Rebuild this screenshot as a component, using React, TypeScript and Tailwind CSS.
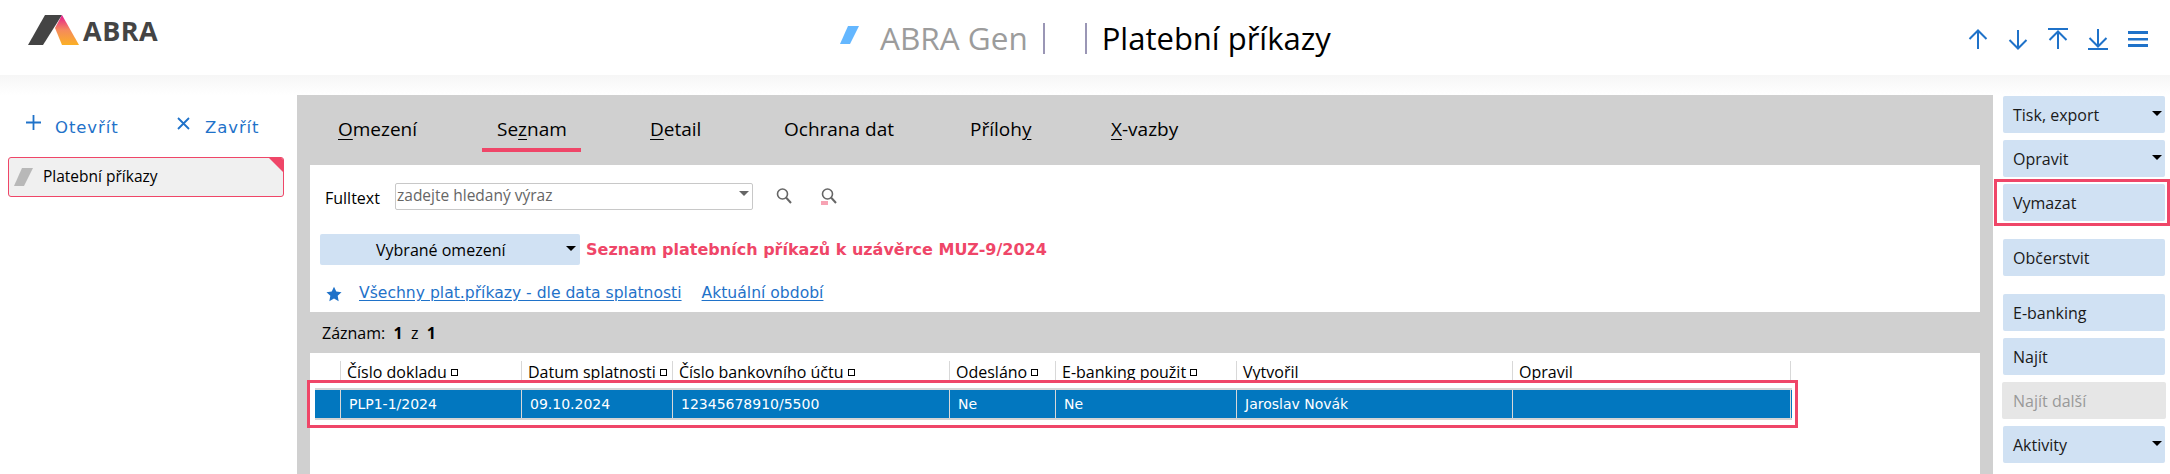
import type { ReactNode } from "react";

const segoe = "font-['Open_Sans','Noto_Sans',sans-serif]";
const tahoma = "font-['DejaVu_Sans',sans-serif]";

function Key({ children }: { children: ReactNode }) {
  return <span className="underline underline-offset-[3px] decoration-1">{children}</span>;
}

function NavIcon({ d }: { d: string }) {
  return (
    <svg width="24" height="24" viewBox="0 0 24 24" fill="none" stroke="#1f72c9" strokeWidth="2">
      <path d={d} />
    </svg>
  );
}

function Caret({ className }: { className: string }) {
  return <span className={`w-0 h-0 border-x-[5px] border-x-transparent border-t-[5px] ${className}`} />;
}

function SideButton({ label, menu, disabled, mt }: { label: string; menu?: boolean; disabled?: boolean; mt: string }) {
  return (
    <button
      className={`h-[37px] rounded-[2px] flex items-center justify-between pr-[3px] text-[16px] text-left ${mt} ${
        disabled ? "w-[164px] -ml-px pl-[11px] bg-[#e6e6e6] text-[#999999]" : "w-[162px] pl-[10px] bg-[#d0e1f3] text-[#1a1a1a]"
      }`}
    >
      {label}
      {menu && <Caret className="border-t-black mb-[3px]" />}
    </button>
  );
}

function SortBox() {
  return <span className="inline-block w-[7px] h-[7px] border border-black ml-[4px] mb-[2px]" />;
}

const columns = [
  { title: "", value: "", width: "w-[26px]", sort: false },
  { title: "Číslo dokladu", value: "PLP1-1/2024", width: "w-[181px]", sort: true },
  { title: "Datum splatnosti", value: "09.10.2024", width: "w-[151px]", sort: true },
  { title: "Číslo bankovního účtu", value: "12345678910/5500", width: "w-[277px]", sort: true },
  { title: "Odesláno", value: "Ne", width: "w-[106px]", sort: true },
  { title: "E-banking použit", value: "Ne", width: "w-[181px]", sort: true },
  { title: "Vytvořil", value: "Jaroslav Novák", width: "w-[276px]", sort: false },
  { title: "Opravil", value: "", width: "w-[278px]", sort: false },
];

function SearchIcon({ marked }: { marked?: boolean }) {
  return (
    <svg width="18" height="18" viewBox="0 0 18 18" fill="none" strokeWidth="1.6">
      <circle cx="7.5" cy="7" r="5" stroke="#666666" />
      <path d="M11 10.5 16 16" stroke="#666666" strokeWidth="2" />
      {marked && <path d="M1 15h7M1 17h7" stroke="#ef4668" strokeWidth="1" />}
    </svg>
  );
}

export default function App() {
  return (
    <div className={`w-[2170px] h-[474px] overflow-hidden bg-white text-black ${segoe}`}>
      <header className="h-[75px] flex items-center">
        <div className="w-[840px] flex items-center pl-[28px] pb-[15px]">
          <svg width="52" height="31" viewBox="0 0 52 31">
            <defs>
              <linearGradient id="abra" x1="0" y1="0" x2="0" y2="1">
                <stop offset="0" stopColor="#e5178f" />
                <stop offset="0.5" stopColor="#f58a5c" />
                <stop offset="1" stopColor="#fbb025" />
              </linearGradient>
            </defs>
            <path d="M0 30 17 0h17L15 30z" fill="#444444" />
            <path d="M34 0 51 30H34l-7-17z" fill="url(#abra)" />
          </svg>
          <span className="ml-[3px] text-[27px] font-bold text-[#444444] tracking-[0.5px] leading-none">ABRA</span>
        </div>
        <div className="flex items-center w-[1127px] pt-[1px]">
          <svg width="20" height="18" viewBox="0 0 20 18" className="mt-[-6px]">
            <path d="M8 0h11L10 18H0z" fill="#64b7ff" />
          </svg>
          <span className="ml-[20px] text-[31.500px] text-[#9c9c9c] leading-none">ABRA Gen</span>
          <span className="ml-[15px] w-[2px] h-[31px] bg-[#9a96b5]" />
          <span className="ml-[40px] w-[2px] h-[31px] bg-[#9a96b5]" />
          <span className="ml-[15px] text-[31px] leading-none">Platební příkazy</span>
        </div>
        <div className="flex items-center pt-[3px]">
          <div className="flex gap-[16px] -ml-[1px]">
            <NavIcon d="M12 22V4M3.5 12 12 3.5 20.5 12" />
            <NavIcon d="M12 3v18M3.5 13 12 21.5 20.5 13" />
            <NavIcon d="M12 22V4M3.5 13 12 4.5 20.5 13M2 2h20" />
            <NavIcon d="M12 2v18M3.5 11 12 19.5 20.5 11M2 22h20" />
          </div>
          <svg width="20" height="16" viewBox="0 0 20 16" className="ml-[18px]" fill="#1f72c9">
            <path d="M0 0h20v3H0zM0 7h20v2.500H0zM0 13h20v3H0z" />
          </svg>
        </div>
      </header>
      <div className="h-[20px] bg-gradient-to-b from-[#f6f6f6] to-white" />

      <div className="flex">
        <aside className="w-[297px] shrink-0">
          <div className={`flex h-[62px] pt-[20px] text-[16.500px] tracking-[0.9px] text-[#1f72c9] ${tahoma}`}>
            <div className="w-[176px] flex items-start pl-[26px]">
              <svg width="15" height="15" viewBox="0 0 15 15" stroke="#1f72c9" strokeWidth="1.8">
                <path d="M7.500 0v15M0 7.500h15" />
              </svg>
              <span className="ml-[14px] mt-[3px] leading-[20px]">Otevřít</span>
            </div>
            <div className="flex items-start pl-[1px]">
              <svg width="13" height="13" viewBox="0 0 13 13" stroke="#1f72c9" strokeWidth="1.8" className="mt-[2px]">
                <path d="m1 1 11 11M12 1 1 12" />
              </svg>
              <span className="ml-[15px] mt-[3px] leading-[20px]">Zavřít</span>
            </div>
          </div>
          <div className="relative ml-[8px] w-[276px] h-[40px] rounded-[3px] border border-[#ef4668] bg-[#f0f0f0] flex items-center overflow-hidden">
            <svg width="20" height="18" viewBox="0 0 20 18" className="ml-[5px] mt-[-1px]">
              <path d="M8 0h11L10 18H0z" fill="#b8b8b8" />
            </svg>
            <span className="ml-[9px] text-[15.500px] font-medium">Platební příkazy</span>
            <span className="absolute top-0 right-0 w-0 h-0 border-l-[14px] border-l-transparent border-t-[14px] border-t-[#ef4668]" />
          </div>
        </aside>

        <main className="w-[1696px] shrink-0 h-[379px] bg-[#d0d0d0] pl-[13px] pr-[13px]">
          <nav className="h-[70px] flex text-[19px]">
            <div className="w-[172px] pl-[28px] pt-[20px]"><Key>O</Key>mezení</div>
            <div className="w-[168px] relative pl-[15px] pt-[20px]">
              <span>Se<Key>z</Key>nam</span>
              <span className="absolute left-0 top-[53px] w-[99px] h-[4px] bg-[#ef4668]" />
            </div>
            <div className="w-[134px] pt-[20px]"><Key>D</Key>etail</div>
            <div className="w-[186px] pt-[20px]">Ochrana dat</div>
            <div className="w-[141px] pt-[20px]">Příloh<Key>y</Key></div>
            <div className="pt-[20px]"><Key>X</Key>-vazby</div>
          </nav>

          <section className="h-[147px] bg-white">
            <div className="flex items-center h-[44px] pt-[18px] pl-[15px]">
              <span className="w-[70px] text-[16px] pt-[3px]">Fulltext</span>
              <div className="w-[358px] h-[27px] border border-[#c8c8c8] rounded-[2px] flex items-center justify-between pr-[3px]">
                <span className="pl-[1px] text-[15.500px] text-[#666666]">zadejte hledaný výraz</span>
                <Caret className="border-t-[#666666] mb-[6px]" />
              </div>
              <span className="ml-[22px] flex gap-[27px]">
                <SearchIcon />
                <SearchIcon marked />
              </span>
            </div>
            <div className="flex items-center pl-[10px] mt-[25px]">
              <button className="w-[260px] h-[31px] bg-[#d0e1f3] rounded-[2px] flex items-center justify-between pl-[56px] pr-[4px] text-[16px] relative">
                Vybrané omezení
                <Caret className="border-t-black mb-[2px]" />
              </button>
              <span className={`ml-[6px] text-[16px] font-bold text-[#ef4668] ${tahoma}`}>
                Seznam platebních příkazů k uzávěrce MUZ-9/2024
              </span>
            </div>
            <div className="flex items-center pl-[16px] mt-[17px] text-[#1f72c9]">
              <svg width="16" height="16" viewBox="0 0 24 24" fill="#1f72c9">
                <path d="m12 1 3.400 7.300 7.900 1-5.800 5.500 1.500 7.900-7-3.900-7 3.900 1.500-7.900L.7 9.300l7.900-1z" />
              </svg>
              <a className={`ml-[17px] underline underline-offset-2 text-[15.600px] ${tahoma}`}>Všechny plat.příkazy - dle data splatnosti</a>
              <a className={`ml-[20px] underline underline-offset-2 text-[15.600px] ${tahoma}`}>Aktuální období</a>
            </div>
          </section>

          <div className="h-[41px] flex items-center pl-[12px] text-[16px]">
            Záznam:&nbsp;&nbsp;<b className="font-bold">1</b>&nbsp;&nbsp;z&nbsp;&nbsp;<b className="font-bold">1</b>
          </div>

          <section className="h-[121px] bg-white pt-[8px] pl-[5px]">
            <div className="flex h-[22px] text-[16px] leading-[22px] whitespace-nowrap">
              {columns.map((c) => (
                <div key={c.title} className={`${c.width} pl-[6px] border-r border-[#d8d8d8] overflow-hidden`}>
                  {c.title}
                  {c.sort && <SortBox />}
                </div>
              ))}
            </div>
            <div className="relative z-10 -ml-[8px] -mt-[3px] w-[1491px] h-[48px] border-[3px] border-[#ef4668] pl-[5px] pt-[5px] bg-white">
              <div className={`flex h-[32px] w-[1477px] border-y-2 border-[#d4d4d4] bg-[#0277bf] text-white text-[14px] items-center ${tahoma}`}>
                {columns.map((c) => (
                  <div key={c.title} className={`${c.width} h-full flex items-center pl-[8px] border-r border-[#d8d8d8]`}>
                    {c.value}
                  </div>
                ))}
              </div>
            </div>
          </section>
        </main>

        <aside className="flex-1 flex flex-col pl-[10px]">
          <SideButton label="Tisk, export" menu mt="mt-[1px]" />
          <SideButton label="Opravit" menu mt="mt-[7px]" />
          <div className="relative z-10 -ml-[9px] mt-[2px] w-[176px] h-[47px] border-[3px] border-[#ef4668] pl-[6px] pt-[2px] shrink-0 bg-white">
            <SideButton label="Vymazat" mt="mt-[0px]" />
          </div>
          <SideButton label="Občerstvit" mt="mt-[13px]" />
          <SideButton label="E-banking" mt="mt-[18px]" />
          <SideButton label="Najít" mt="mt-[7px]" />
          <SideButton label="Najít další" disabled mt="mt-[7px]" />
          <SideButton label="Aktivity" menu mt="mt-[7px]" />
        </aside>
      </div>
    </div>
  );
}
